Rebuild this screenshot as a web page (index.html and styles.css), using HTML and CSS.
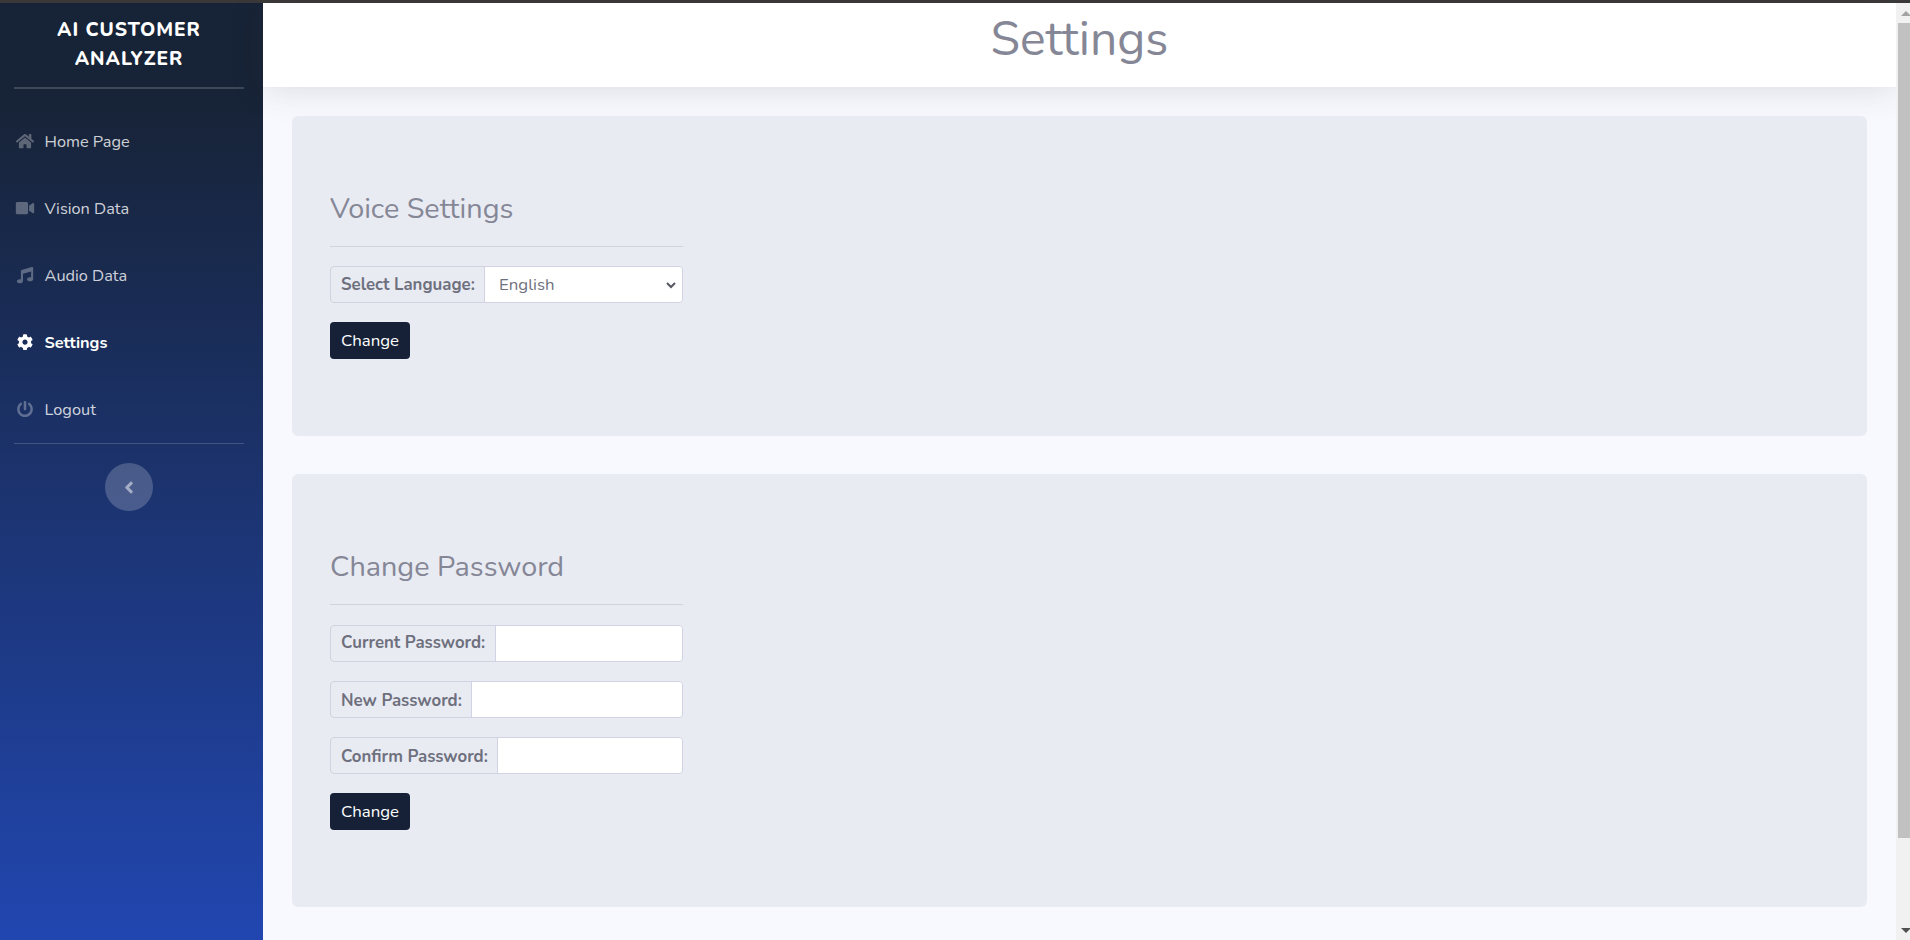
FILE: index.html
```html
<!DOCTYPE html>
<html lang="en">
<head>
<meta charset="utf-8">
<title>Settings</title>
<link rel="stylesheet" href="styles.css">
</head>
<body>
<div class="page">
  <nav class="sidebar">
    <div class="brand">AI CUSTOMER<br>ANALYZER</div>
    <hr class="rule rule-thick">
    <ul class="menu">
      <li class="item"><svg class="icon" viewBox="0 0 576 512"><path d="M280.37 148.26L96 300.11V464a16 16 0 0 0 16 16l112.06-.29a16 16 0 0 0 15.92-16V368a16 16 0 0 1 16-16h64a16 16 0 0 1 16 16v95.64a16 16 0 0 0 16 16.05L464 480a16 16 0 0 0 16-16V300L295.67 148.26a12.19 12.19 0 0 0-15.3 0zM571.6 251.47L488 182.56V44.05a12 12 0 0 0-12-12h-56a12 12 0 0 0-12 12v72.61L318.47 43a48 48 0 0 0-61 0L4.34 251.47a12 12 0 0 0-1.6 16.9l25.5 31A12 12 0 0 0 45.15 301l235.22-193.74a12.19 12.19 0 0 1 15.3 0L530.9 301a12 12 0 0 0 16.9-1.6l25.5-31a12 12 0 0 0-1.7-16.93z"/></svg><span class="name">Home Page</span></li>
      <li class="item"><svg class="icon" viewBox="0 0 576 512"><path d="M336.2 64H47.8C21.4 64 0 85.4 0 111.8v288.4C0 426.6 21.4 448 47.8 448h288.4c26.4 0 47.8-21.4 47.8-47.8V111.8c0-26.4-21.4-47.8-47.8-47.8zm189.4 37.7L416 177.3v157.4l109.6 75.5c21.2 14.6 50.4-.3 50.4-25.8V127.5c0-25.4-29.1-40.4-50.4-25.8z"/></svg><span class="name">Vision Data</span></li>
      <li class="item"><svg class="icon" viewBox="-32 0 576 512"><path d="M511.99 32.01c0-21.71-21.1-37.01-41.6-30.51L150.4 96c-13.3 4.2-22.4 16.5-22.4 30.5v261.42c-10.05-2.38-20.72-3.92-32-3.92-53.02 0-96 28.65-96 64s42.98 64 96 64 96-28.65 96-64V214.31l256-75.02v184.63c-10.05-2.38-20.72-3.92-32-3.92-53.02 0-96 28.65-96 64s42.98 64 96 64 96-28.65 96-64l-.01-351.99z"/></svg><span class="name">Audio Data</span></li>
      <li class="item active"><svg class="icon" viewBox="-32 0 576 512"><path d="M487.4 315.7l-42.6-24.6c4.3-23.2 4.3-47 0-70.2l42.6-24.6c4.9-2.8 7.1-8.6 5.5-14-11.1-35.6-30-67.8-54.7-94.6-3.8-4.1-10-5.1-14.8-2.3L380.8 110c-17.9-15.4-38.5-27.3-60.8-35.1V25.8c0-5.6-3.9-10.5-9.4-11.7-36.7-8.2-74.3-7.8-109.2 0-5.5 1.2-9.4 6.1-9.4 11.7V75c-22.2 7.9-42.8 19.8-60.8 35.1L88.7 85.5c-4.9-2.8-11-1.9-14.8 2.3-24.7 26.7-43.6 58.9-54.7 94.6-1.7 5.4.6 11.2 5.5 14L67.3 221c-4.3 23.2-4.3 47 0 70.2l-42.6 24.6c-4.9 2.8-7.1 8.6-5.5 14 11.1 35.6 30 67.8 54.7 94.6 3.8 4.1 10 5.1 14.8 2.3l42.6-24.6c17.9 15.4 38.5 27.3 60.8 35.1v49.2c0 5.6 3.9 10.5 9.4 11.7 36.7 8.2 74.3 7.8 109.2 0 5.5-1.2 9.4-6.1 9.4-11.7v-49.2c22.2-7.9 42.8-19.8 60.8-35.1l42.6 24.6c4.9 2.8 11 1.9 14.8-2.3 24.7-26.7 43.6-58.9 54.7-94.6 1.5-5.5-.7-11.3-5.6-14.1zM256 336c-44.1 0-80-35.9-80-80s35.9-80 80-80 80 35.9 80 80-35.9 80-80 80z"/></svg><span class="name">Settings</span></li>
      <li class="item"><svg class="icon" viewBox="-32 0 576 512"><path d="M400 54.1c63 45 104 118.6 104 201.9 0 136.8-110.8 247.7-247.5 248C120 504.3 8.2 393 8 256.4 7.9 173.1 48.9 99.3 111.8 54.2c11.7-8.3 28-4.8 35 7.7L162.6 90c5.9 10.5 3.1 23.8-6.6 31-41.5 30.8-68 79.6-68 134.9-.1 92.3 74.5 168.1 168 168.1 91.6 0 168.6-74.2 168-169.1-.3-51.8-24.700-101.800-68.100-134-9.700-7.200-12.400-20.500-6.500-30.900l15.800-28.100c7-12.400 23.200-16.100 34.800-7.800zM296 264V24c0-13.300-10.700-24-24-24h-32c-13.300 0-24 10.700-24 24v240c0 13.300 10.700 24 24 24h32c13.300 0 24-10.700 24-24z"/></svg><span class="name">Logout</span></li>
    </ul>
    <hr class="rule">
    <button class="toggle" aria-label="Collapse menu"><svg viewBox="0 0 256 512"><path d="M31.700 239l136-136c9.400-9.400 24.600-9.400 33.900 0l22.600 22.600c9.400 9.400 9.400 24.600 0 33.900L127.900 256l96.400 96.400c9.400 9.400 9.400 24.600 0 33.900L201.700 409c-9.400 9.400-24.600 9.400-33.900 0l-136-136c-9.500-9.400-9.500-24.600-.1-34z"/></svg></button>
  </nav>
  <main class="content">
    <header class="topbar"><h1 class="title">Settings</h1></header>
    <section class="card voice">
      <h2 class="heading">Voice Settings</h2>
      <div class="group"><label class="label label-select">Select Language:</label><div class="field">English<svg class="chevron" viewBox="0 0 10 6"><path d="M1 1l4 4 4-4"/></svg></div></div>
      <button class="btn">Change</button>
    </section>
    <section class="card password">
      <h2 class="heading">Change Password</h2>
      <div class="group"><label class="label label-current">Current Password:</label><div class="field"></div></div>
      <div class="group"><label class="label label-new">New Password:</label><div class="field"></div></div>
      <div class="group"><label class="label label-confirm">Confirm Password:</label><div class="field"></div></div>
      <button class="btn">Change</button>
    </section>
  </main>
  <div class="scrollbar"><svg class="arrow up" viewBox="0 0 10 5"><path d="M0 5l5-5 5 5z"/></svg><div class="thumb"></div><svg class="arrow down" viewBox="0 0 10 5"><path d="M0 0l5 5 5-5z"/></svg></div>
</div>
</body>
</html>
```
FILE: styles.css
```css
* { box-sizing: border-box; }
body { margin: 0; overflow: hidden; background: #f8f9fe; color: #6e707e; font: 16.8px/24px Nunito, Lato, sans-serif; }
.page { display: flex; height: 940px; border-top: 3px solid #3a3838; }
.sidebar { width: 263px; flex: none; padding: 11px 19px 0 14px; background: linear-gradient(180deg, #172336 10%, #2146b0 100%); color: #fff; }
.brand { height: 73px; padding: 2px 0 0; text-align: center; font-size: 19.2px; font-weight: 800; line-height: 29px; letter-spacing: .96px; }
.rule { height: 1px; margin: 0; border: 0; background: rgba(255,255,255,.17); }
.rule-thick { height: 2px; }
.menu { margin: 19px 0 0; padding: 0; list-style: none; }
.item { display: flex; align-items: center; height: 67px; gap: 10px; padding-left: .5px; color: rgba(255,255,255,.8); font-size: 16.32px; }
.name { padding-top: 1px; }
.icon { width: 20px; height: 16.32px; fill: rgba(255,255,255,.3); }
.active { color: #fff; font-weight: 700; }
.active .icon { fill: #fff; }
.toggle { display: flex; align-items: center; justify-content: center; width: 48px; height: 48px; margin: 19px auto 0; padding: 0; border: 0; border-radius: 50%; background: rgba(255,255,255,.2); }
.toggle svg { width: 10px; height: 19px; fill: rgba(255,255,255,.5); }
.content { flex: 1; }
.topbar { height: 84px; background: #fff; box-shadow: 0 3px 34px rgba(58,59,69,.15); text-align: center; }
.title { margin: 0; padding-top: 7px; color: #858796; font-size: 48px; font-weight: 400; line-height: 58px; }
.card { margin: 29px 29px 0; padding: 76px 38px 0; border-radius: 6px; background: #e9ebf3; }
.voice { height: 320px; }
.password { height: 433px; margin-top: 38px; }
.heading { width: 353px; height: 55px; margin: 0 0 19px; border-bottom: 1px solid #d1d3de; color: #858796; font-size: 28.8px; font-weight: 400; line-height: 34px; }
.password .heading { margin-bottom: 20px; }
.group { display: flex; width: 353px; height: 37px; margin-bottom: 19px; border: 1px solid #d1d3e2; border-radius: 4px; overflow: hidden; }
.label { flex: none; padding: 6px 0 0 10px; border-right: 1px solid #d1d3e2; font-weight: 700; white-space: nowrap; }
.label-select { width: 154px; }
.label-current { width: 165px; padding-top: 5px; }
.label-new { width: 141px; padding-top: 7px; }
.label-confirm { width: 167px; padding-top: 7px; }
.field { display: flex; flex: 1; align-items: center; justify-content: space-between; padding: 1px 6px 0 14px; background: #fff; }
.chevron { width: 10px; height: 6px; overflow: visible; fill: none; stroke: #555762; stroke-width: 2; }
.btn { display: block; width: 80px; height: 37px; padding: 1px 0 0; border: 0; border-radius: 4px; background: #162137; color: #fff; font: inherit; }
.scrollbar { display: flex; flex-direction: column; align-items: flex-end; width: 14px; background: #f1f1f1; }
.thumb { width: 12px; height: 815px; background: #c1c1c1; }
.arrow { width: 10px; height: 5px; }
.up { margin: 8px -1px 7px 0; fill: #a3a3a3; }
.down { margin: auto -1px 7px 0; fill: #505050; }
```
